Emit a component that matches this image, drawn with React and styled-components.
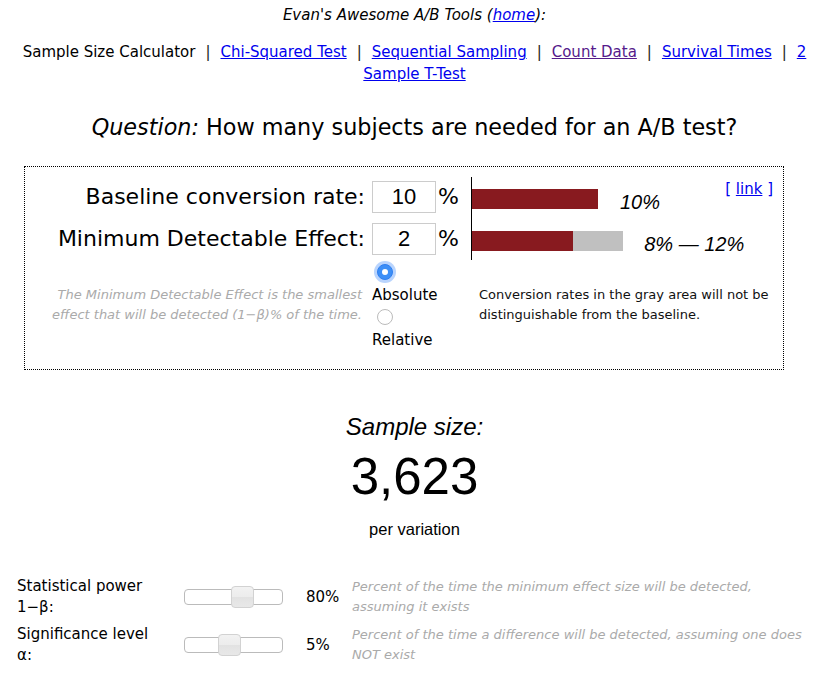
import React from "react";
import styled, { createGlobalStyle } from "styled-components";

const GlobalStyle = createGlobalStyle`
  body {
    margin: 0;
    background: #fff;
    color: #000;
    font-family: "DejaVu Sans", "Liberation Sans", sans-serif;
  }
`;

const helvetica = `"Liberation Sans", Arial, sans-serif`;

const Page = styled.div`
  width: 829px;
  padding-top: 6px;
`;

const Header = styled.div`
  text-align: center;
  font-size: 15px;
  line-height: 18px;
  font-style: italic;
`;

const Link = styled.a`
  color: ${(props) => (props.visited ? "#551a8b" : "#0000ee")};
  text-decoration: underline;
`;

const Nav = styled.div`
  margin-top: 17px;
  text-align: center;
  font-size: 15px;
  line-height: 22px;
`;

const Sep = styled.span`
  margin: 0 10px;
  color: #222;
`;

const Question = styled.h2`
  margin: 28px 0 0;
  text-align: center;
  font-size: 22.3px;
  line-height: 28px;
  font-weight: normal;
`;

const Box = styled.div`
  position: relative;
  margin: 25px 0 0 24px;
  width: 758px;
  height: 202px;
  border: 1px dotted #000;
`;

const TopRow = styled.div`
  display: flex;
  align-items: flex-start;
  padding-top: 10px;
`;

const Fields = styled.div`
  display: grid;
  grid-template-columns: 347px 64px 35px;
  row-gap: 10px;
  margin-top: 4px;
  align-items: center;
`;

const Label = styled.div`
  text-align: right;
  padding-right: 7px;
  font-size: 22px;
  line-height: 32px;
  white-space: nowrap;
`;

const NumberBox = styled.div`
  box-sizing: border-box;
  width: 64px;
  height: 32px;
  border: 1px solid #ccc;
  text-align: center;
  font-family: ${helvetica};
  font-size: 22px;
  line-height: 30px;
`;

const Unit = styled.div`
  padding-left: 2px;
  font-size: 22px;
  line-height: 32px;
`;

const Chart = styled.div`
  display: flex;
  flex-direction: column;
  gap: 22px;
  padding: 12px 0 9px;
  border-left: 1px solid #000;
`;

const BarRow = styled.div`
  display: flex;
  align-items: center;
  height: 20px;
`;

const Bar = styled.div`
  height: 20px;
  background: ${(props) => (props.gray ? "#c0c0c0" : "#881a1f")};
`;

const BarText = styled.span`
  margin-left: ${(props) => props.gap}px;
  padding-top: 6px;
  font-family: ${helvetica};
  font-size: 20px;
  font-style: italic;
  white-space: nowrap;
`;

const Permalink = styled.div`
  position: absolute;
  top: 13px;
  right: 10px;
  font-size: 15px;
  line-height: 18px;
  color: #0000ee;
  white-space: nowrap;
`;

const BottomRow = styled.div`
  display: grid;
  grid-template-columns: 347px 107px 1fr;
`;

const Hint = styled.p`
  margin: 25px 0 0;
  padding-right: 10px;
  text-align: ${(props) => (props.muted ? "right" : "left")};
  font-size: 13px;
  line-height: 20px;
  font-style: ${(props) => (props.muted ? "italic" : "normal")};
  color: ${(props) => (props.muted ? "#aaa" : "#111")};
`;

const Radios = styled.div`
  display: flex;
  flex-direction: column;
  padding-top: 4px;
`;

const Radio = styled.span`
  box-sizing: border-box;
  position: relative;
  display: block;
  width: 16px;
  height: 16px;
  margin-left: 5px;
  border-radius: 50%;
  border: 1px solid ${(props) => (props.checked ? "#2f7ff0" : "#bbb")};
  background: ${(props) => (props.checked ? "#3d8ff7" : "#fff")};
  box-shadow: ${(props) =>
    props.checked ? "0 0 0 3px rgba(100, 160, 250, 0.45)" : "none"};

  &::after {
    content: "";
    display: ${(props) => (props.checked ? "block" : "none")};
    position: absolute;
    left: 4px;
    top: 4px;
    width: 6px;
    height: 6px;
    border-radius: 50%;
    background: #fff;
  }
`;

const RadioLabel = styled.span`
  font-size: 15px;
  line-height: 20px;
  margin: 5px 0 4px;
`;

const Result = styled.div`
  margin-top: 42px;
  text-align: center;
  font-family: ${helvetica};
`;

const ResultTitle = styled.div`
  font-size: 24px;
  line-height: 30px;
  font-style: italic;
`;

const ResultValue = styled.div`
  margin-top: 5px;
  font-size: 51px;
  line-height: 60px;
`;

const ResultUnit = styled.div`
  margin-top: 12px;
  font-size: 16.5px;
  line-height: 20px;
`;

const Settings = styled.div`
  margin-top: 37px;
  padding: 0 19px 0 17px;
  display: flex;
  flex-direction: column;
  gap: 6px;
`;

const SettingRow = styled.div`
  display: grid;
  grid-template-columns: 167px 99px 69px 1fr;
  align-items: center;
`;

const SettingLabel = styled.div`
  font-size: 15px;
  line-height: 21px;
`;

const Track = styled.div`
  box-sizing: border-box;
  position: relative;
  width: 99px;
  height: 16px;
  border: 1px solid #bbb;
  border-radius: 4px;
  background: #fff;
`;

const Thumb = styled.div`
  box-sizing: border-box;
  position: absolute;
  top: -4px;
  left: ${(props) => props.pos}px;
  width: 23px;
  height: 22px;
  border: 1px solid #d2d2d2;
  border-radius: 4px;
  background: linear-gradient(#f2f2f2 0%, #ececec 50%, #e2e2e2 51%, #e8e8e8 100%);
`;

const SettingValue = styled.div`
  padding-left: 23px;
  font-size: 15px;
`;

const SettingNote = styled.div`
  font-size: 13px;
  line-height: 20px;
  font-style: italic;
  color: #aaa;
`;

const SCALE = 12.6;

export default function App() {
  const baseline = 10;
  const mde = 2;
  const low = baseline - mde;
  const high = baseline + mde;

  return (
    <Page>
      <GlobalStyle />
      <Header>
        Evan's Awesome A/B Tools (<Link href="#">home</Link>):
      </Header>
      <Nav>
        Sample Size Calculator<Sep>|</Sep>
        <Link href="#">Chi-Squared Test</Link>
        <Sep>|</Sep>
        <Link href="#">Sequential Sampling</Link>
        <Sep>|</Sep>
        <Link href="#" visited>
          Count Data
        </Link>
        <Sep>|</Sep>
        <Link href="#">Survival Times</Link>
        <Sep>|</Sep>
        <Link href="#">
          2<br />
          Sample T-Test
        </Link>
      </Nav>

      <Question>
        <i>Question:</i> How many subjects are needed for an A/B test?
      </Question>

      <Box>
        <Permalink>
          [ <Link href="#">link</Link> ]
        </Permalink>
        <TopRow>
          <Fields>
            <Label>Baseline conversion rate:</Label>
            <NumberBox>{baseline}</NumberBox>
            <Unit>%</Unit>
            <Label>Minimum Detectable Effect:</Label>
            <NumberBox>{mde}</NumberBox>
            <Unit>%</Unit>
          </Fields>
          <Chart>
            <BarRow>
              <Bar style={{ width: baseline * SCALE }} />
              <BarText gap={22}>{baseline}%</BarText>
            </BarRow>
            <BarRow>
              <Bar style={{ width: low * SCALE }} />
              <Bar gray style={{ width: (high - low) * SCALE }} />
              <BarText gap={21}>
                {low}% — {high}%
              </BarText>
            </BarRow>
          </Chart>
        </TopRow>
        <BottomRow>
          <Hint muted>
            The Minimum Detectable Effect is the smallest effect that will be
            detected (1−β)% of the time.
          </Hint>
          <Radios>
            <Radio checked />
            <RadioLabel>Absolute</RadioLabel>
            <Radio />
            <RadioLabel>Relative</RadioLabel>
          </Radios>
          <Hint>
            Conversion rates in the gray area will not be distinguishable from
            the baseline.
          </Hint>
        </BottomRow>
      </Box>

      <Result>
        <ResultTitle>Sample size:</ResultTitle>
        <ResultValue>3,623</ResultValue>
        <ResultUnit>per variation</ResultUnit>
      </Result>

      <Settings>
        <SettingRow>
          <SettingLabel>
            Statistical power
            <br />
            1−β:
          </SettingLabel>
          <Track>
            <Thumb pos={46} />
          </Track>
          <SettingValue>80%</SettingValue>
          <SettingNote>
            Percent of the time the minimum effect size will be detected,
            assuming it exists
          </SettingNote>
        </SettingRow>
        <SettingRow>
          <SettingLabel>
            Significance level
            <br />
            α:
          </SettingLabel>
          <Track>
            <Thumb pos={33} />
          </Track>
          <SettingValue>5%</SettingValue>
          <SettingNote>
            Percent of the time a difference will be detected, assuming one does
            NOT exist
          </SettingNote>
        </SettingRow>
      </Settings>
    </Page>
  );
}
